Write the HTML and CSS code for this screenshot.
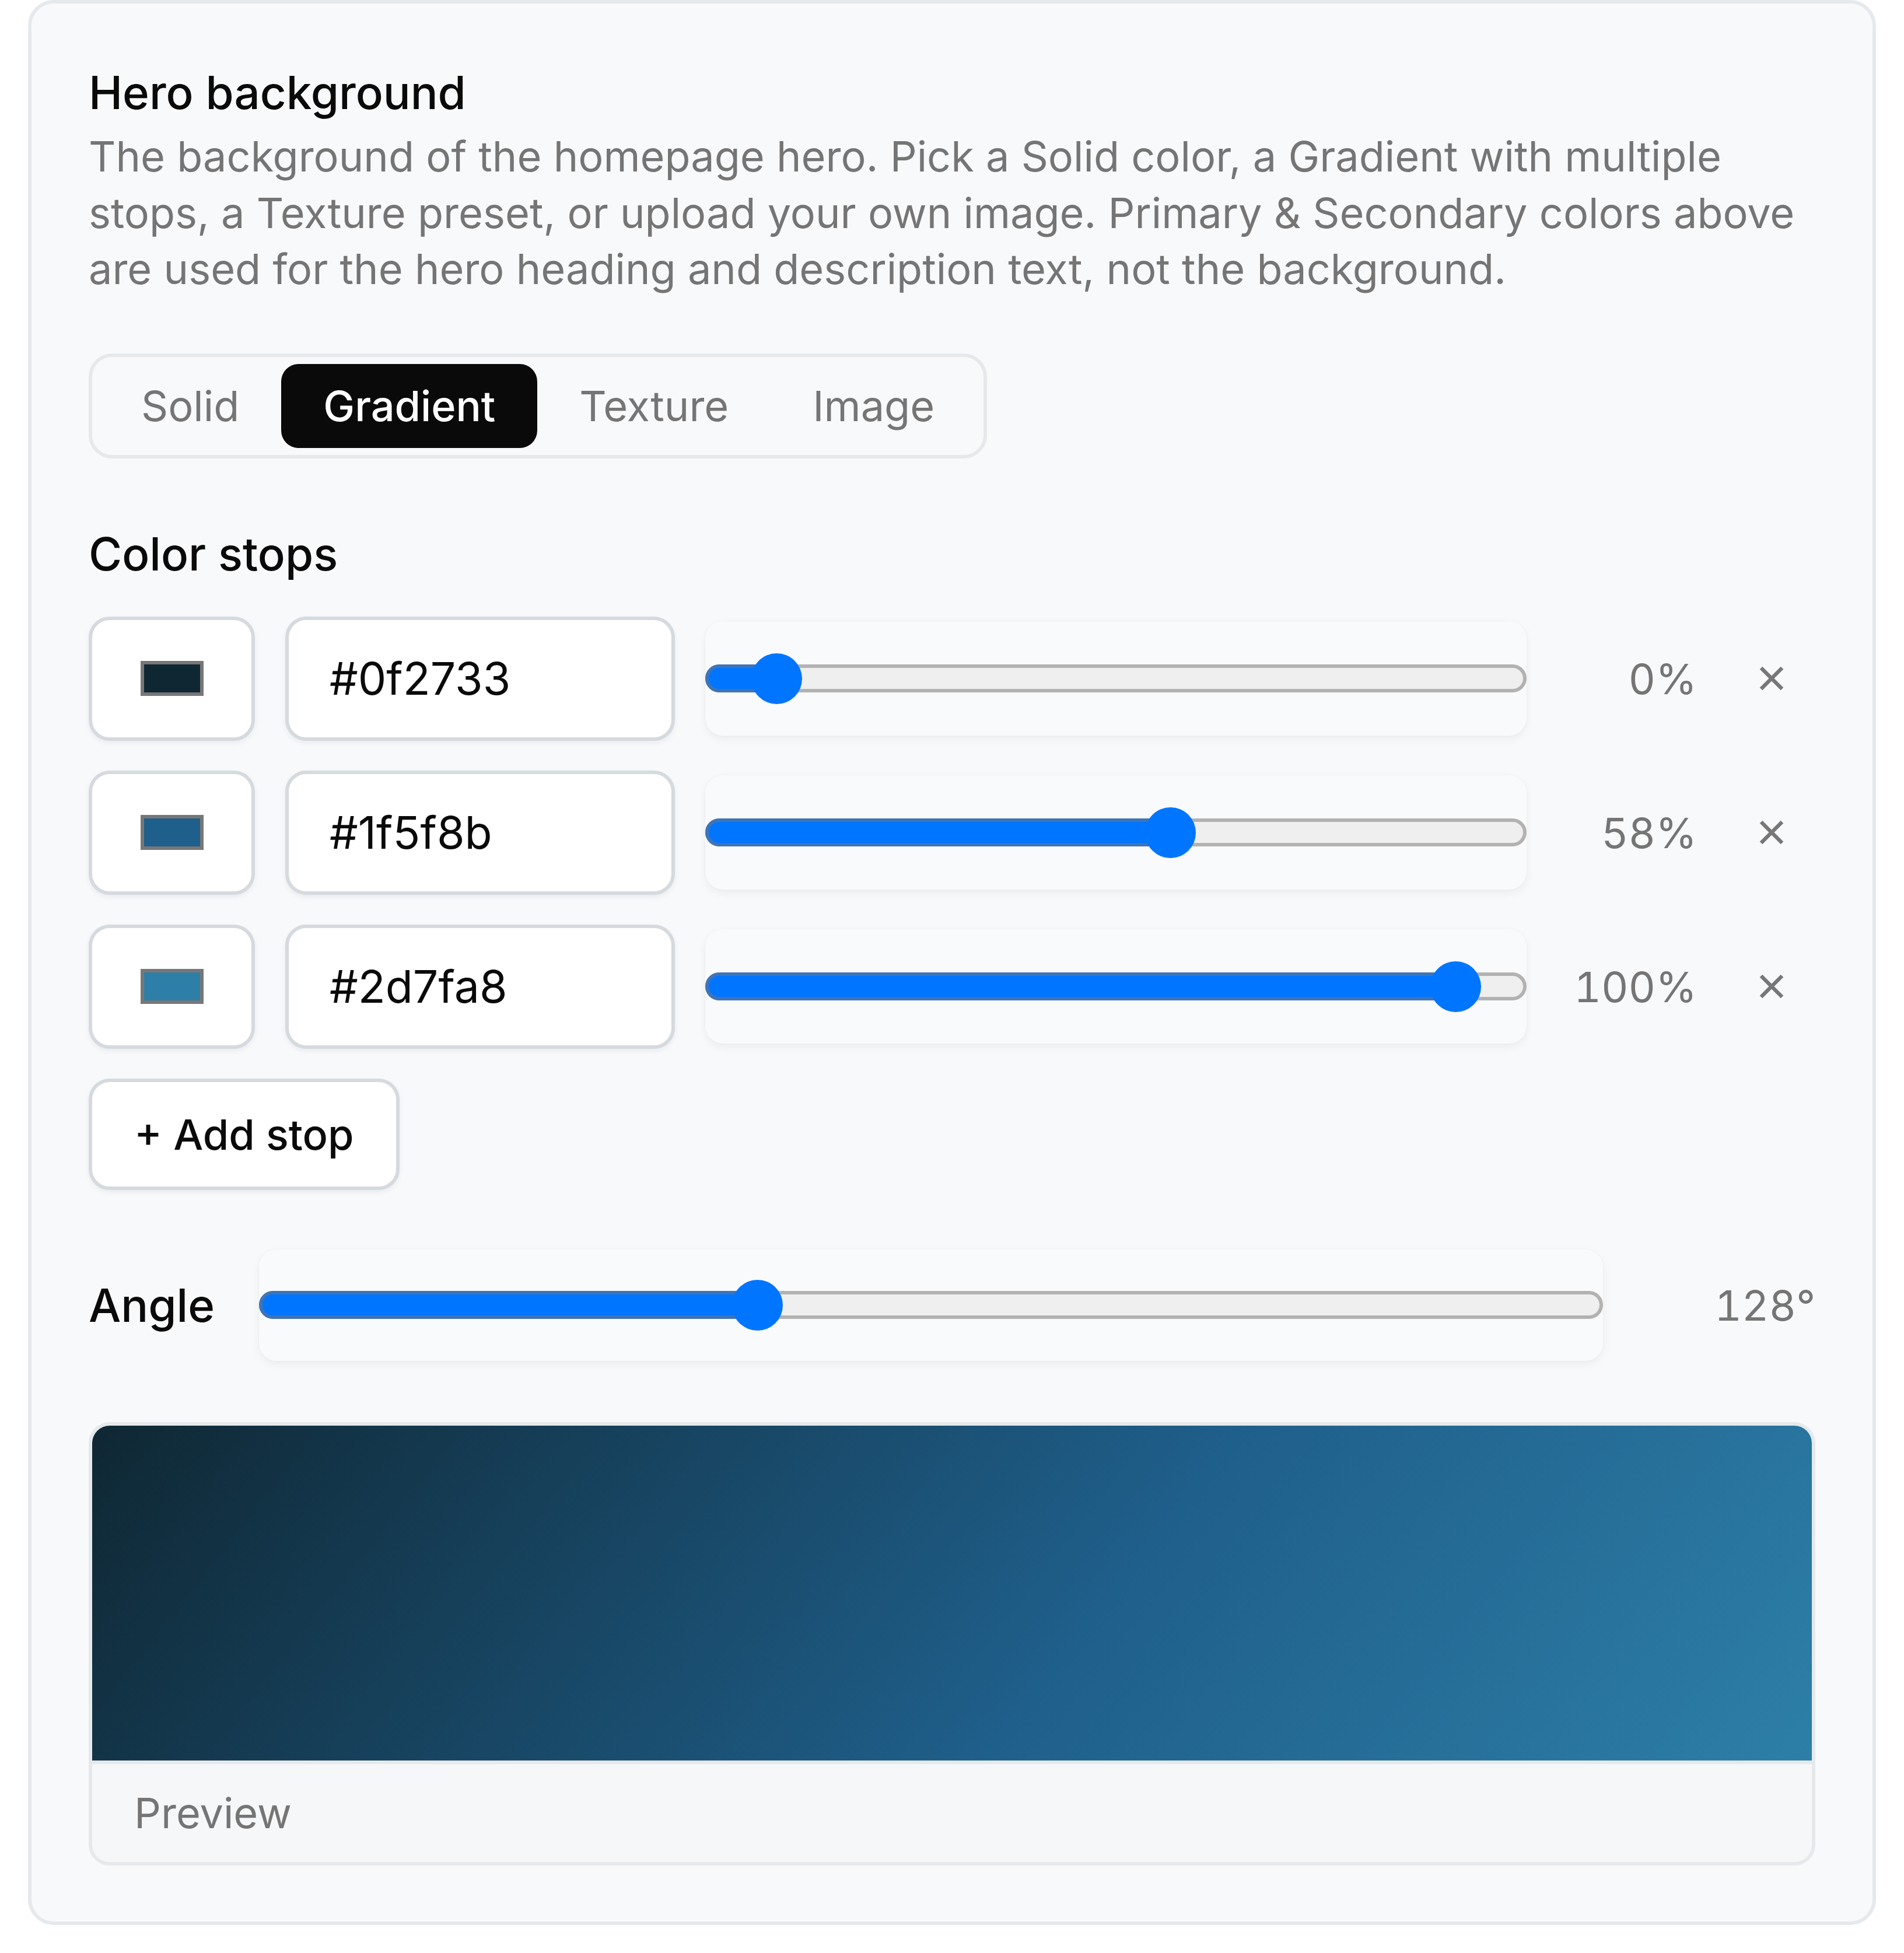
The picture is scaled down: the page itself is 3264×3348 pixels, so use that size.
FILE: index.html
```html
<!DOCTYPE html>
<html lang="en">
<head>
  <meta charset="UTF-8" />
  <meta name="viewport" content="width=device-width, initial-scale=1" />
  <title>Hero background</title>
  <link rel="stylesheet" href="styles.css">
</head>
<body>

  <section class="panel">
    <h2 class="panel-title">Hero background</h2>
    <p class="panel-desc">The background of the homepage hero. Pick a Solid color, a Gradient with multiple stops, a Texture preset, or upload your own image. Primary &amp; Secondary colors above are used for the hero heading and description text, not the background.</p>

    <div class="tabs" role="tablist">
      <button class="tab" role="tab">Solid</button>
      <button class="tab active" role="tab">Gradient</button>
      <button class="tab" role="tab">Texture</button>
      <button class="tab" role="tab">Image</button>
    </div>

    <h3 class="section-title">Color stops</h3>

    <div class="stops">
      <div class="stop">
        <input type="color" class="swatch" value="#0f2733">
        <input type="text" class="hex" value="#0f2733">
        <div class="range" style="--v:0">
          <div class="track"><div class="fill"></div></div>
          <span class="thumb"></span>
        </div>
        <span class="stop-pos">0%</span>
        <button class="remove" aria-label="Remove stop">
          <svg width="42" height="42" viewBox="0 0 42 42"><path d="M3 3L39 39M39 3L3 39" /></svg>
        </button>
      </div>

      <div class="stop">
        <input type="color" class="swatch" value="#1f5f8b">
        <input type="text" class="hex" value="#1f5f8b">
        <div class="range" style="--v:.58">
          <div class="track"><div class="fill"></div></div>
          <span class="thumb"></span>
        </div>
        <span class="stop-pos">58%</span>
        <button class="remove" aria-label="Remove stop">
          <svg width="42" height="42" viewBox="0 0 42 42"><path d="M3 3L39 39M39 3L3 39" /></svg>
        </button>
      </div>

      <div class="stop">
        <input type="color" class="swatch" value="#2d7fa8">
        <input type="text" class="hex" value="#2d7fa8">
        <div class="range" style="--v:1">
          <div class="track"><div class="fill"></div></div>
          <span class="thumb"></span>
        </div>
        <span class="stop-pos">100%</span>
        <button class="remove" aria-label="Remove stop">
          <svg width="42" height="42" viewBox="0 0 42 42"><path d="M3 3L39 39M39 3L3 39" /></svg>
        </button>
      </div>

      <button class="add-stop">+ Add stop</button>
    </div>

    <div class="angle-row">
      <label class="angle-label">Angle</label>
      <div class="range range-angle" style="--v:.3556">
        <div class="track"><div class="fill"></div></div>
        <span class="thumb"></span>
      </div>
      <span class="angle-val">128°</span>
    </div>

    <div class="preview">
      <div class="preview-fill" style="background:linear-gradient(128deg,#0f2733 0%,#1f5f8b 58%,#2d7fa8 100%)"></div>
      <div class="preview-label">Preview</div>
    </div>
  </section>

</body>
</html>
```

FILE: styles.css
```css
:root{
  --ink:#0a0a0a;
  --muted:#757575;
  --panel:#f8f9fb;
  --line:#e6e9ec;
  --field-line:#d5dadf;
  --accent:#0075ff;
}
*{box-sizing:border-box}
body{
  margin:0;
  background:#fff;
  font-family:Inter,"Noto Sans",sans-serif;
  color:var(--ink);
}
button,input{font-family:inherit}

/* ---------- panel ---------- */
.panel{
  margin:0 48px;
  padding:101px 98px 96px;
  background:var(--panel);
  border:6px solid var(--line);
  border-radius:44px;
}
.panel-title{margin:0;font-size:78px;line-height:104px;font-weight:500}
.panel-desc{margin:9px 0 0;font-size:72px;line-height:96.5px;color:var(--muted)}

/* ---------- tabs ---------- */
.tabs{
  display:flex;
  width:max-content;
  margin-top:96px;
  padding:12px;
  border:6px solid var(--line);
  border-radius:40px;
}
.tab{
  padding:18px 72px;
  border:0;
  border-radius:30px;
  background:none;
  font-size:72px;
  line-height:108px;
  color:var(--muted);
  cursor:pointer;
}
.tab.active{background:var(--ink);color:#fff;font-weight:500}

.section-title{margin:111px 0 55px;font-size:78px;line-height:105px;font-weight:500}

/* ---------- stop rows ---------- */
.stops{display:flex;flex-direction:column;gap:51px}
.stop{
  display:grid;
  grid-template-columns:285px 668px 1fr 240px 151px;
  column-gap:52px;
  align-items:center;
  height:213px;
}
.swatch,.hex,.add-stop{
  border:6px solid var(--field-line);
  border-radius:36px;
  background:#fff;
  box-shadow:0 4px 10px rgba(17,24,39,.06);
}
.swatch{
  -webkit-appearance:none;
  appearance:none;
  width:285px;
  height:213px;
  padding:0;
  cursor:pointer;
}
.swatch::-webkit-color-swatch-wrapper{padding:70.5px 82.5px}
.swatch::-webkit-color-swatch{border:6px solid #777;border-radius:0}
.hex{
  width:100%;
  height:213px;
  padding:0 0 0 70px;
  font-size:77px;
  color:var(--ink);
  outline:none;
}
.stop-pos,.angle-val{
  text-align:right;
  font-size:72px;
  font-variant-numeric:tabular-nums;
  color:var(--muted);
}
.remove{
  display:flex;
  justify-content:center;
  padding:0;
  border:0;
  background:none;
  cursor:pointer;
}
.remove svg path{stroke:#777;stroke-width:6.5;fill:none}

.add-stop{
  align-self:flex-start;
  height:191px;
  padding:0 72px;
  font-size:72px;
  font-weight:500;
  color:var(--ink);
  cursor:pointer;
}

/* ---------- range slider ---------- */
.range{
  position:relative;
  display:flex;
  align-items:center;
  height:196px;
  border-radius:30px;
  background:#f9fafb;
  box-shadow:0 6px 16px rgba(0,0,0,.05),0 0 4px rgba(0,0,0,.03);
}
.track{
  position:relative;
  flex:1;
  height:48px;
  border:6px solid #b2b2b2;
  border-radius:24px;
  background:#efefef;
}
.fill{
  position:absolute;
  left:-6px;top:-6px;bottom:-6px;
  width:calc(122px + (100% - 232px) * var(--v));
  border:6px solid #3e74b8;
  border-radius:24px;
  background:var(--accent);
}
.thumb{
  position:absolute;
  top:50%;
  left:calc(122px + (100% - 244px) * var(--v));
  width:87px;height:87px;
  margin:-43.5px 0 0 -43.5px;
  border-radius:50%;
  background:var(--accent);
}

/* ---------- angle ---------- */
.angle-row{
  display:grid;
  grid-template-columns:240px 1fr 312px;
  column-gap:52px;
  align-items:center;
  margin-top:102px;
}
.angle-label{font-size:78px;font-weight:500}
.range-angle{height:191px}

/* ---------- preview ---------- */
.preview{
  margin-top:105px;
  border:6px solid var(--line);
  border-radius:36px;
  overflow:hidden;
  background:#f6f7f9;
}
.preview-fill{height:574px}
.preview-label{
  display:flex;
  align-items:center;
  height:174px;
  padding:0 72px;
  border-top:6px solid var(--line);
  font-size:72px;
  color:var(--muted);
}
```
